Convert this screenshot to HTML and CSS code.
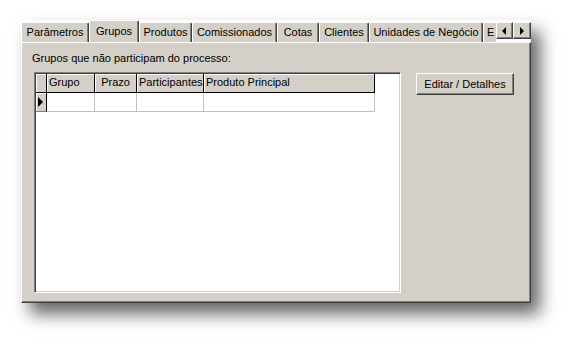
FILE: index.html
```html
<!DOCTYPE html>
<html lang="pt">
<head>
    <meta charset="UTF-8">
    <title>Grupos</title>
    <link rel="stylesheet" href="styles.css">
</head>
<body>
    <div class="window">
        <div class="tabstrip">
            <div class="tabs">
                <div class="tab">Parâmetros</div>
                <div class="tab active">Grupos</div>
                <div class="tab">Produtos</div>
                <div class="tab">Comissionados</div>
                <div class="tab">Cotas</div>
                <div class="tab">Clientes</div>
                <div class="tab">Unidades de Negócio</div>
                <div class="tab">E</div>
            </div>
            <div class="arrows">
                <div class="arrow"><span class="tri-left"></span></div>
                <div class="arrow"><span class="tri-right"></span></div>
            </div>
        </div>

        <div class="page">
            <div class="main">
                <div class="caption">Grupos que não participam do processo:</div>
                <div class="grid">
                    <div class="row header">
                        <div class="cell ind"></div>
                        <div class="cell c-grupo">Grupo</div>
                        <div class="cell c-prazo">Prazo</div>
                        <div class="cell c-part">Participantes</div>
                        <div class="cell c-prod">Produto Principal</div>
                    </div>
                    <div class="row data">
                        <div class="cell ind"><span class="tri-right big"></span></div>
                        <div class="cell c-grupo"></div>
                        <div class="cell c-prazo"></div>
                        <div class="cell c-part"></div>
                        <div class="cell c-prod"></div>
                    </div>
                </div>
            </div>
            <div class="side">
                <button class="btn" type="button">Editar / Detalhes</button>
            </div>
        </div>
    </div>
</body>
</html>
```

FILE: styles.css
```css
html, body {
    margin: 0;
    background: #fff;
}
body {
    min-height: 346px;
    padding: 20px 0 0 21px;
    box-sizing: border-box;
    font-family: "Liberation Sans", Arial, sans-serif;
    font-size: 11px;
    color: #000;
}
.window {
    width: 510px;
    height: 283px;
    display: flex;
    flex-direction: column;
    box-shadow: 9px 11px 16px rgba(0, 0, 0, 0.6);
}
.tabstrip {
    height: 22px;
    display: flex;
    background: #fff;
}
.tabs {
    flex: 1;
    display: flex;
    align-items: flex-end;
    overflow: hidden;
}
.tab {
    box-sizing: border-box;
    flex: none;
    height: 20px;
    padding-top: 3px;
    text-align: center;
    white-space: nowrap;
    background: #d4d0c8;
    border-top: 1px solid #fff;
    border-left: 1px solid #fff;
    border-right: 1px solid #404040;
    border-radius: 2px 2px 0 0;
    box-shadow: inset -1px 0 #808080;
}
.tab:nth-child(1) { width: 68px; }
.tab:nth-child(2) { width: 50px; }
.tab:nth-child(3) { width: 53px; }
.tab:nth-child(4) { width: 85px; }
.tab:nth-child(5) { width: 42px; }
.tab:nth-child(6) { width: 50px; }
.tab:nth-child(7) { width: 114px; }
.tab:nth-child(8) {
    width: 13px;
    text-align: left;
    padding-left: 3px;
    border-right: none;
    box-shadow: none;
}
.tab.active {
    height: 23px;
    margin-bottom: -1px;
    padding-top: 4px;
    position: relative;
    z-index: 1;
}
.arrows {
    display: flex;
    margin-top: 2px;
    height: 17px;
}
.arrow {
    box-sizing: border-box;
    width: 17px;
    height: 17px;
    background: #d4d0c8;
    border-top: 1px solid #fff;
    border-left: 1px solid #fff;
    border-right: 1px solid #404040;
    border-bottom: 1px solid #404040;
    box-shadow: inset -1px -1px #808080;
    display: flex;
    align-items: center;
    justify-content: center;
}
.arrow:last-child {
    width: 18px;
}
.tri-left {
    width: 0;
    height: 0;
    border-top: 4px solid transparent;
    border-bottom: 4px solid transparent;
    border-right: 4px solid #000;
    margin-right: 1px;
}
.tri-right {
    width: 0;
    height: 0;
    border-top: 4px solid transparent;
    border-bottom: 4px solid transparent;
    border-left: 4px solid #000;
}
.tri-right.big {
    border-top-width: 5px;
    border-bottom-width: 5px;
    border-left-width: 5px;
}
.page {
    box-sizing: border-box;
    flex: 1;
    display: flex;
    background: #d4d0c8;
    border-top: 1px solid #fff;
    border-left: 1px solid #fff;
    border-right: 1px solid #404040;
    border-bottom: 1px solid #404040;
    box-shadow: inset -1px -1px #808080;
    padding: 9px 16px 9px 10px;
}
.main {
    display: flex;
    flex-direction: column;
}
.caption {
    height: 13px;
    line-height: 13px;
    margin-bottom: 7px;
}
.grid {
    box-sizing: border-box;
    width: 367px;
    height: 221px;
    margin-left: 2px;
    background: #fff;
    border-top: 1px solid #808080;
    border-left: 1px solid #808080;
    border-right: 1px solid #fff;
    border-bottom: 1px solid #fff;
    box-shadow: inset 1px 1px #404040, inset -1px -1px #d4d0c8;
    padding: 1px 0 0 1px;
}
.row {
    display: flex;
}
.cell {
    box-sizing: border-box;
    flex: none;
    white-space: nowrap;
    overflow: hidden;
}
.header .cell {
    height: 19px;
    line-height: 17px;
    background: #d4d0c8;
    border-right: 1px solid #000;
    border-bottom: 1px solid #000;
    box-shadow: inset 1px 1px #fff;
    padding-left: 2px;
}
.data .cell {
    height: 19px;
    border-right: 1px solid #c0c0c0;
    border-bottom: 1px solid #c0c0c0;
}
.data .cell.ind {
    background: #d4d0c8;
    border-right: 1px solid #000;
    border-bottom: 1px solid #808080;
    box-shadow: inset 1px 1px #fff;
    display: flex;
    align-items: center;
    padding-left: 2px;
}
.ind { width: 11px; }
.c-grupo { width: 48px; }
.c-prazo { width: 42px; }
.header .c-prazo { text-align: right; padding-right: 6px; }
.c-part { width: 67px; }
.c-prod { width: 171px; }
.side {
    padding-left: 15px;
    padding-top: 21px;
}
.btn {
    box-sizing: border-box;
    width: 98px;
    height: 22px;
    font-family: "Liberation Sans", Arial, sans-serif;
    font-size: 11px;
    color: #000;
    background: #d4d0c8;
    border-top: 1px solid #fff;
    border-left: 1px solid #fff;
    border-right: 1px solid #404040;
    border-bottom: 1px solid #404040;
    box-shadow: inset -1px -1px #808080;
    padding: 0;
}
```
